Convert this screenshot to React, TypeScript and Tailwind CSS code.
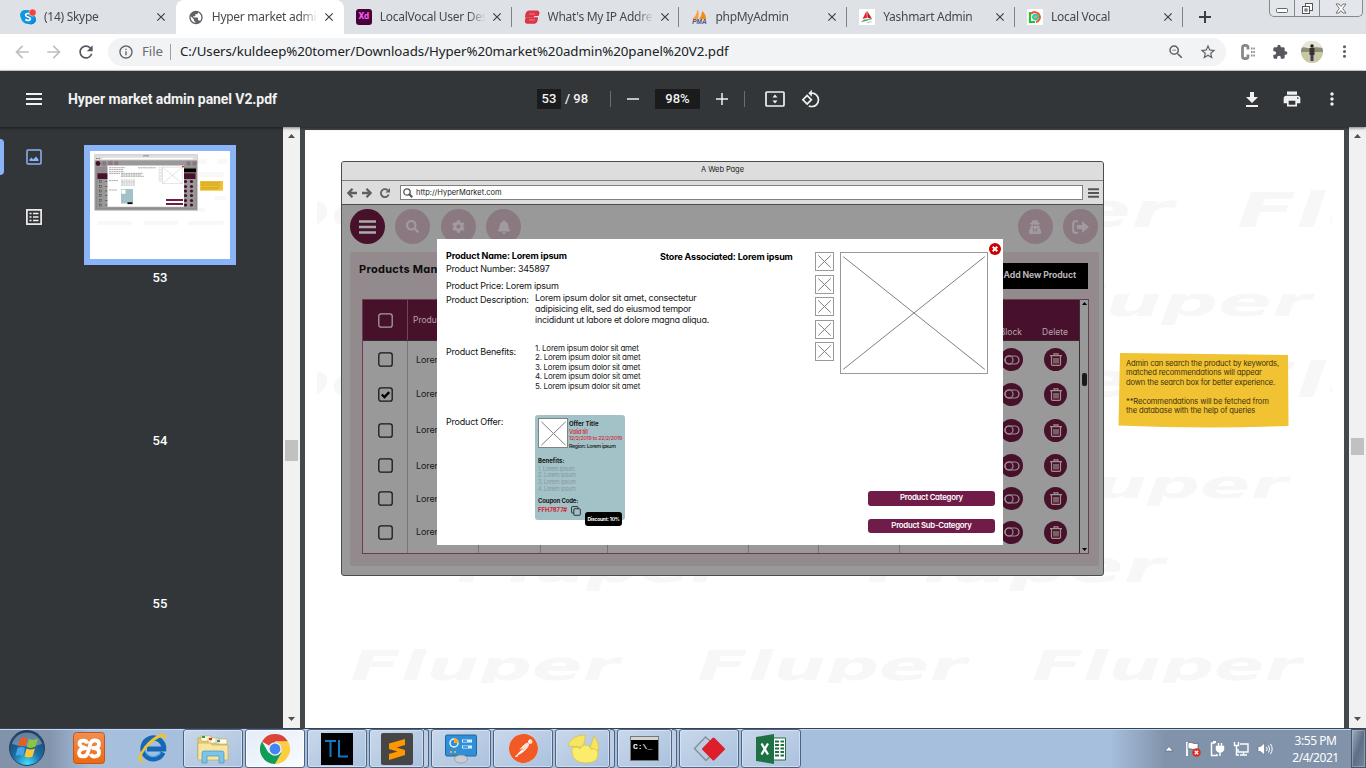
import type { ReactNode } from "react";
import {
  MdArrowBack,
  MdArrowForward,
  MdClose,
  MdExtension,
  MdInfoOutline,
  MdMoreVert,
  MdPrint,
  MdPublic,
  MdRefresh,
  MdRotate90DegreesCcw,
  MdStarBorder,
  MdZoomOut,
} from "react-icons/md";
import { FaBell, FaCog, FaSearch, FaUserSecret } from "react-icons/fa";
import { SiPostman } from "react-icons/si";

/* ---------- browser chrome ---------- */

function SkypeIcon() {
  return (
    <svg viewBox="0 0 16 16" className="size-4">
      <circle cx="5" cy="6" r="5" fill="#0d9ee8" />
      <circle cx="11" cy="10.500" r="5" fill="#0a7fd0" />
      <circle cx="8" cy="8" r="7" fill="#0f95e2" />
      <path d="M10.500 5.500C9 4 5.500 4.200 5.600 6.200 5.800 8.400 10.400 7.400 10.400 9.800c0 2-3.500 2.200-5 .6" fill="none" stroke="#fff" strokeWidth="1.600" />
      <circle cx="12.600" cy="3.600" r="3.600" fill="#f2443c" stroke="#dee1e6" strokeWidth=".6" />
    </svg>
  );
}

function XdIcon() {
  return (
    <span className="flex size-4 items-center justify-center rounded-[3px] bg-[#470137] font-['Roboto',sans-serif] text-[9px] font-bold text-[#ff61f6]">
      Xd
    </span>
  );
}

function ExpressIcon() {
  return (
    <svg viewBox="0 0 16 16" className="size-4">
      <path d="M5.500 1.500h7.500a2.500 2.500 0 0 1 2.300 3.400l-.8 2.200H1.200C1.200 3.500 3 1.500 5.500 1.500Z" fill="#dc3545" />
      <path d="M1.500 8.300h12.500C14 12.500 12.600 14.800 10 14.800H3.300A2.500 2.500 0 0 1 1 11.400Z" fill="#dc3545" />
      <path d="M1 7.500h9" stroke="#dc3545" strokeWidth="1.500" />
      <path d="M5 5h6M5 11h6" stroke="#e9a3ab" strokeWidth=".7" fill="none" />
    </svg>
  );
}

function PmaIcon() {
  return (
    <span className="flex size-4 flex-col items-center">
      <svg viewBox="0 0 16 10" className="h-[10px] w-4">
        <path d="M1 10C4 8 6 5 6.500 0 8 3 8 7 7 10Z" fill="#f9a13a" />
        <path d="M8 10c2-2 3-5 3-8 3 2 4 5 4 8Z" fill="#f58b0b" />
      </svg>
      <span className="font-['Liberation_Sans',sans-serif] text-[6.500px] leading-[6px] font-bold text-[#4b4f86] italic">PMA</span>
    </span>
  );
}

function YashIcon() {
  return (
    <svg viewBox="0 0 16 16" className="size-4 bg-white">
      <path d="M7.500 2 3.500 10 8 8.800Z" fill="#e8252a" />
      <path d="M8.200 2 13 10 8.500 8.800Z" fill="#c8151c" />
      <path d="M2 13c3-3 6-3 11.500-2.200C9 11 6 12.500 2 13Z" fill="#2fa866" />
      <path d="M7 13.800c2-1.200 4-1.300 6.500-.8Z" fill="#2fa866" />
    </svg>
  );
}

function VocalIcon() {
  return (
    <svg viewBox="0 0 16 16" className="size-4 bg-white">
      <path d="M3 3v10h5" fill="none" stroke="#22c032" strokeWidth="2.200" />
      <path d="M4 5a5 5 0 1 1 5 8" fill="none" stroke="#f0562c" strokeWidth="2" />
      <circle cx="8.500" cy="8" r="3" fill="#35c1f0" stroke="#2bd07a" />
      <circle cx="8.500" cy="8" r="1.200" fill="#f6a53a" />
    </svg>
  );
}

type TabInfo = { title: string; icon: ReactNode; active?: boolean; sep?: boolean };

const tabs: TabInfo[] = [
  { title: "(14) Skype", icon: <SkypeIcon /> },
  { title: "Hyper market admin", icon: <MdPublic className="size-[17px] text-[#5f6368]" />, active: true },
  { title: "LocalVocal User Des", icon: <XdIcon />, sep: true },
  { title: "What's My IP Addre", icon: <ExpressIcon />, sep: true },
  { title: "phpMyAdmin", icon: <PmaIcon />, sep: true },
  { title: "Yashmart Admin", icon: <YashIcon />, sep: true },
  { title: "Local Vocal", icon: <VocalIcon />, sep: true },
];

function Tab({ tab }: { tab: TabInfo }) {
  return (
    <div className={tab.active ? "relative flex h-[34px] w-[168px] items-center rounded-t-[8px] bg-white pl-3" : "relative flex h-[34px] w-[167.800px] items-center pl-3"}>
      <span className="flex size-4 shrink-0 items-center justify-center">{tab.icon}</span>
      <span className="ml-2 w-[107px] overflow-hidden text-[12px] tracking-[-0.280px] whitespace-nowrap text-[#45494d] [mask-image:linear-gradient(to_right,black_82%,transparent_99%)]">
        {tab.title}
      </span>
      <MdClose className="ml-[3px] size-[14px] shrink-0 text-[#3c4043]" />
      {tab.sep && <span className="absolute top-[7px] right-0 h-5 w-px bg-[#808387]" />}
    </div>
  );
}

function WindowControls() {
  return (
    <div className="flex h-[17px] w-[94px] rounded-b-[5px] border border-t-0 border-[#85888d] bg-[#e3e6ea]">
      <span className="flex w-[25px] items-center justify-center border-r border-[#85888d]">
        <svg viewBox="0 0 12 5" className="mt-[4px] h-[5px] w-3"><rect x=".5" y=".5" width="11" height="4" rx="1" fill="#fff" stroke="#666" /></svg>
      </span>
      <span className="flex w-[25px] items-center justify-center border-r border-[#85888d]">
        <svg viewBox="0 0 13 13" className="size-[13px]" fill="#fff" stroke="#555">
          <rect x="4.500" y="1.500" width="7" height="7" />
          <rect x="1.500" y="4.500" width="7" height="7" />
          <rect x="4" y="7" width="2" height="2" />
        </svg>
      </span>
      <span className="flex flex-1 items-center justify-center">
        <svg viewBox="0 0 12 11" className="h-[11px] w-3"><path d="M1 1h3l2 2.500L8 1h3L7.700 5.500 11 10H8L6 7.500 4 10H1l3.300-4.500Z" fill="#fff" stroke="#666" strokeWidth=".9" /></svg>
      </span>
    </div>
  );
}

function TabStrip() {
  return (
    <div className="flex h-[34px] shrink-0 bg-[#dee1e6] pl-2 font-['Noto_Sans',sans-serif]">
      {tabs.map((t) => (
        <Tab key={t.title} tab={t} />
      ))}
      <span className="ml-[12px] flex w-5 items-center justify-center">
        <svg viewBox="0 0 12 12" className="size-3"><path d="M6 0v12M0 6h12" stroke="#3c4043" strokeWidth="2" /></svg>
      </span>
      <div className="mr-[3px] ml-auto">
        <WindowControls />
      </div>
    </div>
  );
}

function AddressBar() {
  return (
    <div className="flex h-[37px] shrink-0 items-center border-b border-[#d5d7da] bg-white pb-px font-['Noto_Sans',sans-serif]">
      <div className="flex w-[108px] items-center pl-[12px]">
        <MdArrowBack className="size-5 text-[#bdbfc1]" />
        <MdArrowForward className="ml-3 size-5 text-[#bdbfc1]" />
        <MdRefresh className="ml-3 size-[20px] text-[#55585c]" />
      </div>
      <div className="flex h-7 w-[1118px] items-center rounded-full bg-[#f1f3f4] pl-[10px]">
        <MdInfoOutline className="size-4 text-[#5f6368]" />
        <span className="ml-[8px] w-[28px] text-[13.300px] tracking-[-0.100px] text-[#6a6e73]">File</span>
        <span className="h-4 w-px bg-[#9aa0a6]" />
        <span className="ml-[9px] text-[13.300px] tracking-[-0.070px] whitespace-nowrap text-[#202124]">
          C:/Users/kuldeep%20tomer/Downloads/Hyper%20market%20admin%20panel%20V2.pdf
        </span>
        <MdZoomOut className="ml-auto size-[18px] text-[#5f6368]" />
        <MdStarBorder className="mr-[9px] ml-[14px] size-[18px] text-[#5f6368]" />
      </div>
      <svg viewBox="0 0 16 16" className="ml-[14px] h-4 w-4">
        <path d="M8 5.500V3.500a2 2 0 0 0-2-2H4.500a2 2 0 0 0-2 2v9a2 2 0 0 0 2 2H6a2 2 0 0 0 2-2v-2" fill="none" stroke="#8a8a8a" strokeWidth="2.800" />
        <path d="M11 4.500h1.500M13.300 4.500h1.500M11 8h1.500M13.300 8h1.500M11 11.500h1.500M13.300 11.500h1.500" stroke="#8a8a8a" strokeWidth="2.200" />
      </svg>
      <MdExtension className="ml-[16px] size-4 text-[#55585c]" />
      <svg viewBox="0 0 22 22" className="ml-[13px] size-[22px] overflow-hidden rounded-full bg-[#c9c7a4]">
        <path d="M0 0h22v7H0Z" fill="#e7e6da" />
        <path d="M0 7c4-2 6 1 9 0s9-1 13 0v4H0Z" fill="#8b8f76" />
        <path d="M8.500 7h5v7h-5Z" fill="#3b3131" />
        <circle cx="11" cy="5" r="1.800" fill="#2b211d" />
        <path d="M9.500 14h3v6h-3Z" fill="#31455e" />
      </svg>
      <MdMoreVert className="ml-[12px] size-[19px] text-[#5f6368]" />
    </div>
  );
}

function PdfToolbar() {
  return (
    <div className="relative z-10 flex h-[56px] shrink-0 items-center bg-[#323639] font-['Roboto',sans-serif] text-[#f1f1f1] shadow-[0_1px_3px_rgba(0,0,0,0.5)]">
      <svg viewBox="0 0 16 12" className="ml-[26px] h-3 w-4"><path d="M0 1h16M0 6h16M0 11h16" stroke="#f1f1f1" strokeWidth="2" /></svg>
      <span className="ml-[26px] w-[469px] text-[14px] font-bold tracking-[-0.080px]">Hyper market admin panel V2.pdf</span>
      <span className="flex h-5 w-6 items-center justify-center bg-[#191b1c] text-[13px] font-medium">53</span>
      <span className="ml-[4px] w-[45px] text-[13px] font-medium whitespace-pre">{"/ 98"}</span>
      <span className="h-4 w-px bg-[#6b6e70]" />
      <svg viewBox="0 0 12 12" className="ml-[16px] size-3"><path d="M0 6h12" stroke="#f1f1f1" strokeWidth="1.500" /></svg>
      <span className="ml-[16px] flex h-5 w-[45px] items-center justify-center bg-[#191b1c] text-[13px] font-medium">98%</span>
      <svg viewBox="0 0 12 12" className="ml-[16px] size-3"><path d="M0 6h12M6 0v12" stroke="#f1f1f1" strokeWidth="1.500" /></svg>
      <span className="ml-[16px] h-4 w-px bg-[#6b6e70]" />
      <svg viewBox="0 0 20 16" className="ml-[20px] h-4 w-5">
        <rect x="1" y="1" width="18" height="14" rx="1" fill="none" stroke="#f1f1f1" strokeWidth="1.700" />
        <path d="M10 3.500 12.500 6.500h-5ZM10 12.500 12.500 9.500h-5Z" fill="#f1f1f1" />
      </svg>
      <MdRotate90DegreesCcw className="ml-[16px] size-[20px]" />
      <svg viewBox="0 0 12 15" className="ml-auto h-[15px] w-3"><path d="M4 0h4v5h4l-6 6-6-6h4ZM0 13h12v2H0Z" fill="#f1f1f1" /></svg>
      <MdPrint className="ml-[24px] size-5" />
      <MdMoreVert className="mr-[24px] ml-[20px] size-5" />
    </div>
  );
}

/* ---------- sidebar ---------- */

function ScrollBar({ side }: { side: "left" | "right" }) {
  return (
    <div className="flex w-[17px] shrink-0 flex-col items-center bg-[#f1f1f1] pt-[7px] pb-[7px]">
      <svg viewBox="0 0 7 4" className="h-1 w-[7px]"><path d="M3.500 0 7 4H0Z" fill="#505050" /></svg>
      <span className={side === "left" ? "mt-[302px] h-[21px] w-[13px] bg-[#c1c1c1]" : "mt-[300px] h-[17px] w-[13px] bg-[#c1c1c1]"} />
      <svg viewBox="0 0 7 4" className="mt-auto h-1 w-[7px]"><path d="M0 0h7L3.500 4Z" fill="#505050" /></svg>
    </div>
  );
}

const thumbRows = [28, 33, 37.5, 42, 47, 51.5];

function Thumbnail() {
  return (
    <svg viewBox="0 0 140 108" className="h-[108px] w-[140px] bg-white">
      <path
        d="M8 70h34l-1 4H7ZM54 70h35l-1 4H53ZM99 70h35l-1 4H98ZM108 8h9l-1 5h-9ZM128 8h10l-1 5h-10ZM109 21h26l-1 5h-26ZM125 45h11l-1 4h-10ZM104 57h11l-1 4h-10Z"
        fill="#f8f8f8"
      />
      <rect x="4.500" y="3.500" width="103" height="56" fill="#999" />
      <rect x="4.500" y="3.500" width="103" height="5.800" fill="#ddd" />
      <path d="M12 7.500h91" stroke="#fff" strokeWidth="1.500" />
      <path d="M6 7.500h4" stroke="#777" strokeWidth="1" strokeDasharray="1 .5" />
      <path d="M53 4.800h6" stroke="#777" strokeWidth=".8" />
      <rect x="6" y="16" width="101" height="42" fill="#928a8d" />
      <rect x="7.500" y="27" width="98" height="30" fill="#999" />
      <rect x="7.500" y="22.300" width="98" height="5.700" fill="#47102b" />
      <rect x="94" y="17.500" width="12" height="3.800" fill="#000" />
      <circle cx="8" cy="12.500" r="2.400" fill="#47102b" />
      {[14.2, 20.4, 26.4, 98.5, 104.5].map((x) => (
        <circle key={x} cx={x} cy="12.500" r="2.400" fill="#8b7981" />
      ))}
      {thumbRows.map((y) => (
        <g key={y}>
          <rect x="9.500" y={y + 1.5} width="2" height="2" fill="none" stroke="#444" strokeWidth=".5" />
          <path d={`M15 ${y + 2.5}h4`} stroke="#555" strokeWidth=".8" />
          <circle cx="95.500" cy={y + 2.5} r="1.600" fill="#47102b" />
          <circle cx="101.500" cy={y + 2.5} r="1.600" fill="#47102b" />
        </g>
      ))}
      <rect x="17.500" y="14.500" width="76.500" height="41.300" fill="#fff" />
      <path d="M19 16.700h16M48 16.800h18M19 18.600h14M19 20.700h15M19 22.600h11M31 22.400h22M31 23.900h20M31 25.300h23M19 29.600h9M19 39h8" stroke="#888" strokeWidth=".7" strokeDasharray="2 .4" />
      <path d="M31 29h14M31 30.400h14M31 31.700h14M31 33h14M31 34.300h14" stroke="#aaa" strokeWidth=".6" strokeDasharray="2 .4" />
      <path d="M72.500 16.200h19.800v16.400H72.500ZM72.500 16.200l19.800 16.400M92.300 16.200 72.500 32.600" fill="none" stroke="#bbb" strokeWidth=".4" />
      {[17, 20, 23, 26, 29].map((y) => (
        <rect key={y} x="69" y={y - 0.5} width="2.300" height="2.300" fill="none" stroke="#ccc" strokeWidth=".4" />
      ))}
      <rect x="31" y="38" width="12" height="14.500" fill="#a3c2c8" />
      <rect x="31.500" y="38.700" width="4" height="4" fill="#fff" />
      <rect x="37.500" y="51.300" width="5" height="1.800" fill="#000" />
      <rect x="76" y="48" width="17" height="2" fill="#701b48" />
      <rect x="76" y="52" width="17" height="2" fill="#701b48" />
      <circle cx="93" cy="15.600" r=".9" fill="#c00" />
      <rect x="110" y="30" width="23" height="9.700" fill="#f1c232" />
      <path d="M111 31.500h20M111 33h18M111 34.300h20M111 36.600h19M111 37.900h17" stroke="#b8941f" strokeWidth=".5" />
    </svg>
  );
}

function Sidebar() {
  return (
    <aside className="flex w-[300px] shrink-0 bg-[#323639]">
      <nav className="flex w-[84px] flex-col">
        <div className="mt-[12px] flex h-9 items-center">
          <span className="h-9 w-1 rounded-r-[4px] bg-[#8ab4f8]" />
          <svg viewBox="0 0 16 16" className="ml-[22px] size-4">
            <rect x="1" y="1" width="14" height="14" rx="1" fill="none" stroke="#8ab4f8" strokeWidth="1.500" />
            <path d="M3.500 12V10.500l2-2 1.700 2L10 7.500l2.500 3V12Z" fill="#8ab4f8" />
          </svg>
        </div>
        <svg viewBox="0 0 16 16" className="mt-[34px] ml-[26px] size-4" fill="none" stroke="#f1f1f1">
          <rect x=".9" y=".9" width="14.200" height="14.200" strokeWidth="1.700" />
          <path d="M3.500 4.500h2M7 4.500h5.500M3.500 8h2M7 8h5.500M3.500 11.500h2M7 11.500h5.500" strokeWidth="1.700" />
        </svg>
      </nav>
      <div className="flex w-[199px] flex-col pt-[18px] font-['Roboto',sans-serif] text-[13px] font-medium text-white">
        <div className="w-[152px] border-[6px] border-[#8ab4f8] bg-white">
          <Thumbnail />
        </div>
        <span className="mt-[5px] w-[152px] text-center leading-[16px]">53</span>
        <span className="mt-[147px] w-[152px] text-center leading-[16px]">54</span>
        <span className="mt-[147px] w-[152px] text-center leading-[16px]">55</span>
      </div>
      <ScrollBar side="left" />
    </aside>
  );
}

/* ---------- PDF page ---------- */

const marks = [
  [-183, 97, 308, 48], [560, 97, 308, 48], [932, 97, 312, 48],
  [719, 186, 287, 40],
  [-183, 267, 308, 48], [560, 267, 308, 48], [932, 267, 312, 48],
  [713, 368, 269, 38],
  [152, 452, 270, 44], [562, 452, 297, 44],
  [45, 550, 269, 41], [392, 550, 269, 41], [727, 550, 269, 41],
];

function Watermark() {
  return (
    <svg viewBox="12 0 1015 553" className="absolute top-0 left-[12px] h-[553px] w-[1015px]">
      {marks.map(([x, y, w, s], i) => (
        <text key={i} x={x} y={y} textLength={w} lengthAdjust="spacingAndGlyphs" fontFamily="DejaVu Sans" fontWeight="bold" fontStyle="italic" fontSize={s} fill="#f7f7f7">
          Fluper
        </text>
      ))}
    </svg>
  );
}

function Bubble({ children, dark }: { children: ReactNode; dark?: boolean }) {
  return (
    <span className={dark ? "flex size-[35px] items-center justify-center rounded-full bg-[#47102b] text-[#aaa]" : "flex size-[35px] items-center justify-center rounded-full bg-[#8b7981] text-[#a29b9e]"}>
      {children}
    </span>
  );
}

function Check({ on, light }: { on?: boolean; light?: boolean }) {
  return (
    <svg viewBox="0 0 15 15" className="size-[15px]" fill="none" stroke={light ? "#a99ba2" : "#15191b"}>
      <rect x=".8" y=".8" width="13.400" height="13.400" rx="2.200" strokeWidth="1.300" />
      {on && <path d="m3.800 7.500 2.700 2.600 4.700-4.900" strokeWidth="2.400" stroke="#000" />}
    </svg>
  );
}

function BlockIcon() {
  return (
    <span className="flex size-[23px] items-center justify-center rounded-full bg-[#47102b]">
      <svg viewBox="0 0 16 10" className="h-[10px] w-4" fill="none" stroke="#9c8f95" strokeWidth="1.200">
        <rect x="1" y="1" width="14" height="8" rx="4" />
        <circle cx="5" cy="5" r="4" />
      </svg>
    </span>
  );
}

function DeleteIcon() {
  return (
    <span className="flex size-[23px] items-center justify-center rounded-full bg-[#47102b]">
      <svg viewBox="0 0 12 13" className="h-[13px] w-3" fill="none" stroke="#a1928f" strokeWidth="1.200">
        <path d="M0 2.700h12M4 2.500V.8h4v1.700M1.500 3v8.200q0 1.200 1.200 1.200h6.600q1.200 0 1.200-1.200V3M4 5v5.500M6 5v5.500M8 5v5.500" />
      </svg>
    </span>
  );
}

const tableRows = [
  { h: "h-[37px]" },
  { h: "h-[32px]", on: true },
  { h: "h-[40px]" },
  { h: "h-[31px]" },
  { h: "h-[35px]" },
  { h: "h-[32px]" },
  { h: "h-[5px]", blank: true },
];

const cols = "grid grid-cols-[45px_71px_62px_67px_141px_70px_81px_134px_45px]";

function ProductsTable() {
  return (
    <div className="mr-[10px] ml-[12px] flex h-[255px] border border-[#6d3c52] bg-[#999]">
      <div className="w-[716px] overflow-hidden">
        <div className={`${cols} h-[41px] border-b border-[#3a2a30] bg-[#47102b] text-[8.500px] text-[#b3a5ab]`}>
          <span className="flex items-center justify-center border-r border-[#6b4a58]"><Check light /></span>
          <span className="flex items-center pl-[5px]">Produ</span>
          <span /><span /><span /><span /><span />
          <span className="flex items-end justify-end pr-[12px] pb-[1px]">Block</span>
          <span className="flex items-end justify-center pr-[3px] pb-[1px]">Delete</span>
        </div>
        {tableRows.map((r, i) => (
          <div key={i} className={`${cols} ${r.h} text-[9px] text-[#17191a]`}>
            <span className="flex items-center justify-center border-r border-[#757575]">{!r.blank && <Check on={r.on} />}</span>
            <span className="flex items-center border-r border-[#757575] pl-[8px] tracking-[-0.100px]">{!r.blank && "Lorer"}</span>
            <span className="border-r border-[#757575]" />
            <span className="border-r border-[#757575]" />
            <span className="border-r border-[#757575]" />
            <span className="border-r border-[#757575]" />
            <span className="border-r border-[#757575]" />
            <span className="flex items-center justify-end pr-[11px]">{!r.blank && <BlockIcon />}</span>
            <span className="flex items-center pl-[10px]">{!r.blank && <DeleteIcon />}</span>
          </div>
        ))}
      </div>
      <div className="flex w-[9px] flex-col items-center border-l border-[#333] py-[2px]">
        <svg viewBox="0 0 5 3" className="h-[3px] w-[5px]"><path d="M2.500 0 5 3H0Z" /></svg>
        <span className="mt-[68px] h-[13px] w-[5px] rounded-[2px] bg-[#1b1b1b]" />
        <svg viewBox="0 0 5 3" className="mt-auto h-[3px] w-[5px]"><path d="M0 0h5L2.500 3Z" /></svg>
      </div>
    </div>
  );
}

function CrossBox({ className }: { className: string }) {
  return (
    <svg viewBox="0 0 100 100" preserveAspectRatio="none" className={className}>
      <path d="M1.500 3 98.500 97M98.500 3 1.500 97" stroke="#808080" strokeWidth="1" vectorEffect="non-scaling-stroke" />
    </svg>
  );
}

function OfferCard() {
  return (
    <div className="relative h-[105px] w-[90px] rounded-[3px] bg-[#a3c2c8] pt-[3px] pl-[3px] text-[5.500px] leading-[6.500px] tracking-normal whitespace-nowrap">
      <div className="flex h-[32px]">
        <div className="flex h-[30px] w-[30px] items-center justify-center border border-[#7b8587] bg-white">
          <CrossBox className="size-[25px]" />
        </div>
        <div className="pt-[2px] pl-[1px]">
          <p className="text-[6px] leading-[7px] font-bold text-[#151515]">Offer Title</p>
          <p className="mt-[2px] leading-[6px] font-medium tracking-[-0.200px] text-[#d5222d]">Valid till</p>
          <p className="text-[5.200px] leading-[6px] font-medium tracking-[-0.200px] text-[#d5222d]">12/2/2019 to 22/2/2019</p>
          <p className="mt-[2px] text-[5.300px] leading-[7px] font-medium tracking-[-0.350px] text-[#151515]">Region: Lorem ipsum</p>
        </div>
      </div>
      <p className="mt-[8px] text-[6px] font-bold text-[#151515]">Benefits:</p>
      <ol className="mt-px text-[5.500px] leading-[6.700px] tracking-[-0.180px] text-[#84979b]">
        <li>1. Lorem ipsum</li>
        <li>2. Lorem ipsum</li>
        <li>3. Lorem ipsum</li>
        <li>4. Lorem ipsum</li>
      </ol>
      <p className="mt-[6px] text-[6px] font-bold tracking-[-0.150px] text-[#151515]">Coupon Code:</p>
      <div className="flex">
        <p className="w-[33px] pt-[2px] text-[6px] font-bold tracking-[-0.050px] text-[#d5222d]">FFH7877#</p>
        <svg viewBox="0 0 10 10" className="mt-px size-[10px]" fill="#a3c2c8" stroke="#222" strokeWidth=".9">
          <rect x=".6" y=".6" width="6.500" height="6.500" rx=".6" />
          <rect x="2.800" y="2.800" width="6.500" height="6.500" rx=".6" />
        </svg>
      </div>
      <span className="absolute top-[97px] left-[50px] flex h-[14px] w-[37px] items-center justify-center rounded-[3px] bg-black text-[4.900px] font-bold tracking-[-0.180px] text-white">
        Discount: 10%
      </span>
    </div>
  );
}

function ProductModal() {
  return (
    <div className="absolute top-[78px] left-[96px] flex h-[306px] w-[566px] bg-white text-[9px] tracking-[-0.200px] whitespace-nowrap text-[#111]">
      <div className="w-[378px] shrink-0 pt-[10px] pl-[9px]">
        <div className="flex h-[13px] items-center font-bold tracking-[-0.160px] text-black">
          <span className="w-[214px]">Product Name: Lorem ipsum</span>
          <span className="pt-[2px]">Store Associated: Lorem ipsum</span>
        </div>
        <p className="h-[14px] leading-[14px]">Product Number: 345897</p>
        <p className="mt-[2px] h-[15px] leading-[15px]">Product Price: Lorem ipsum</p>
        <div className="flex h-[50px]">
          <p className="w-[89px] pt-[2px] leading-[10px] tracking-[-0.220px]">Product Description:</p>
          <p className="leading-[10.800px] tracking-[-0.270px] text-[#222]">
            Lorem ipsum dolor sit amet, consectetur<br />
            adipisicing elit, sed do eiusmod tempor<br />
            incididunt ut labore et dolore magna aliqua.
          </p>
        </div>
        <div className="flex h-[72px]">
          <p className="w-[89px] pt-[4px] leading-[10px]">Product Benefits:</p>
          <ol className="pt-px text-[8px] leading-[9.450px] tracking-[-0.250px] text-[#222]">
            <li>1. Lorem ipsum dolor sit amet</li>
            <li>2. Lorem ipsum dolor sit amet</li>
            <li>3. Lorem ipsum dolor sit amet</li>
            <li>4. Lorem ipsum dolor sit amet</li>
            <li>5. Lorem ipsum dolor sit amet</li>
          </ol>
        </div>
        <div className="flex">
          <p className="w-[89px] pt-[2px] leading-[10px]">Product Offer:</p>
          <OfferCard />
        </div>
      </div>
      <div className="flex w-[180px] shrink-0 flex-col pt-[13px]">
        <div className="flex h-[122px]">
          <div className="flex w-[25px] flex-col gap-[3.500px]">
            {[0, 1, 2, 3, 4].map((n) => (
              <span key={n} className="flex size-[19px] items-center justify-center border border-[#999]">
                <CrossBox className="size-[13px]" />
              </span>
            ))}
          </div>
          <span className="flex h-[122px] w-[148px] items-center justify-center border border-[#999]">
            <CrossBox className="h-[120px] w-[146px]" />
          </span>
        </div>
        <div className="mt-[117px] ml-[53px] flex w-[127px] flex-col gap-[13px] text-[7.800px] font-semibold tracking-[-0.250px] text-white">
          <span className="flex h-[14.500px] items-center justify-center rounded-[3px] bg-[#701b48]">Product Category</span>
          <span className="flex h-[14.500px] items-center justify-center rounded-[3px] bg-[#701b48]">Product Sub-Category</span>
        </div>
      </div>
      <svg viewBox="0 0 12 12" className="absolute top-[4px] right-[2px] size-3">
        <circle cx="6" cy="6" r="6" fill="#cc0000" />
        <path d="m3.700 3.700 4.600 4.600M8.300 3.700 3.700 8.300" stroke="#fff" strokeWidth="2" />
      </svg>
    </div>
  );
}

function Wireframe() {
  return (
    <div className="relative h-[415px] w-[763px] shrink-0">
      <div className="flex h-full flex-col overflow-hidden rounded-[3px] border border-[#4c4c4c] bg-[#999]">
        <div className="h-[19px] shrink-0 border-b border-[#808080] bg-[#ddd] text-center text-[7.500px] leading-[15px] tracking-[-0.080px] text-[#222]">A Web Page</div>
        <div className="flex h-[24px] shrink-0 items-center border-b border-[#4c4c4c] bg-[#ddd]">
          <svg viewBox="0 0 10 10" className="ml-[5px] size-[10px]"><path d="M5.500.8 1.300 5l4.200 4.200M1.500 5H10" fill="none" stroke="#606060" strokeWidth="2.300" /></svg>
          <svg viewBox="0 0 10 10" className="ml-[5px] size-[10px]"><path d="M4.500.8 8.700 5 4.500 9.200M8.500 5H0" fill="none" stroke="#606060" strokeWidth="2.300" /></svg>
          <svg viewBox="0 0 10 10" className="ml-[8px] size-[10px]"><path d="M8.700 6.500A4 4 0 1 1 7.800 2.300" fill="none" stroke="#606060" strokeWidth="1.800" /><path d="M10 0v4.500H5.500Z" fill="#606060" /></svg>
          <span className="ml-[10px] flex h-[15px] w-[683px] items-center border border-[#808080] bg-white">
            <svg viewBox="0 0 10 10" className="ml-[2px] size-[10px]"><circle cx="4" cy="4" r="3.200" fill="none" stroke="#555" strokeWidth="1.300" /><path d="m6.300 6.300 3 3" stroke="#555" strokeWidth="2" /></svg>
            <span className="ml-[3px] text-[7.500px] text-[#222]">http://HyperMarket.com</span>
          </span>
          <svg viewBox="0 0 11 10" className="ml-[5px] h-[10px] w-[11px]"><path d="M0 1.300h11M0 5h11M0 8.700h11" stroke="#555" strokeWidth="2" /></svg>
        </div>
        <div className="flex h-[43px] shrink-0 gap-[10.400px] pt-[4px] pr-[5px] pl-[8px]">
          <Bubble dark><svg viewBox="0 0 17 14" className="h-[14px] w-[17px]"><path d="M0 1.500h17M0 7h17M0 12.500h17" stroke="#aaa" strokeWidth="2.600" /></svg></Bubble>
          <Bubble><FaSearch className="size-[13px]" /></Bubble>
          <Bubble><FaCog className="size-[13px]" /></Bubble>
          <Bubble><FaBell className="size-[14px]" /></Bubble>
          <span className="ml-auto"><Bubble><FaUserSecret className="size-[14px]" /></Bubble></span>
          <Bubble>
            <svg viewBox="0 0 17 14" className="h-[14px] w-[17px]">
              <path d="M6 1.200H3.200a2 2 0 0 0-2 2v7.600a2 2 0 0 0 2 2H6" fill="none" stroke="#a29b9e" strokeWidth="2" />
              <path d="M5 5h5V1l7 6-7 6V9H5Z" fill="#a29b9e" />
            </svg>
          </Bubble>
        </div>
        <div className="mt-[4px] ml-[8px] h-[314px] w-[749px] rounded-[3px] bg-[#928a8d]">
          <div className="flex h-[47px] justify-between pr-[11px] pl-[9px]">
            <span className="pt-[10px] text-[11px] leading-[14px] font-bold tracking-[0.300px] text-[#0b0b0b]">Products Man</span>
            <span className="mt-[11px] flex h-[26px] w-[100px] items-center justify-end bg-black pr-[12px] text-[8.700px] font-bold tracking-[-0.100px] whitespace-nowrap text-[#b9b5b6]">Add New Product</span>
          </div>
          <ProductsTable />
        </div>
      </div>
      <ProductModal />
    </div>
  );
}

function StickyNote() {
  return (
    <div className="relative mt-[192px] ml-[14px] h-[75px] w-[171px] pt-[6px] pl-[8px] text-[7.600px] leading-[9.400px] tracking-[-0.140px] whitespace-nowrap text-[#3b3211]">
      <svg viewBox="0 0 171 75" className="absolute inset-0 h-full w-full"><path d="M2 0 170 2 170.500 73Q85 76 .5 72.500Z" fill="#f1c232" /></svg>
      <p className="relative">
        Admin can search the product by keywords,<br />
        matched recommendations will appear<br />
        down the search box for better experience.<br />
        <br />
        **Recommendations will be fetched from<br />
        the database with the help of queries
      </p>
    </div>
  );
}

function PdfPage() {
  return (
    <main className="flex min-w-0 flex-1 bg-[#43484b] pt-[3px] pl-[5px]">
      <div className="relative h-full w-[1039px] overflow-hidden bg-white">
        <Watermark />
        <div className="relative flex pt-[31px] pl-[36px] font-['Inter','Open_Sans',sans-serif] [font-feature-settings:'cv11','ss03']">
          <Wireframe />
          <StickyNote />
        </div>
      </div>
    </main>
  );
}

/* ---------- taskbar ---------- */

function TaskButton({ children, stacked, active }: { children: ReactNode; stacked?: boolean; active?: boolean }) {
  return (
    <div className="flex h-[39px] w-[62px] pr-[2px]">
      <div
        className={
          active
            ? "flex flex-1 items-center justify-center rounded-[3px] border border-[#51647f] bg-linear-to-br from-[#e4ecf7] to-[#fafcff] shadow-[inset_0_0_0_1px_#ffffffcc]"
            : "flex flex-1 items-center justify-center rounded-[3px] border border-[#51647f] bg-linear-to-br from-[#c9d8eb] to-[#aac1de] shadow-[inset_0_0_0_1px_#dfe9f5aa]"
        }
      >
        {children}
      </div>
      {stacked && <div className="w-[5px] rounded-r-[3px] border border-l-0 border-[#51647f] bg-[#bccde4]" />}
    </div>
  );
}

function StartOrb() {
  return (
    <svg viewBox="0 0 36 36" className="size-9">
      <defs>
        <radialGradient id="orb" cx=".5" cy=".95" r=".9">
          <stop offset="0" stopColor="#3fe0ff" />
          <stop offset=".45" stopColor="#1b6fa8" />
          <stop offset="1" stopColor="#1c3f66" />
        </radialGradient>
      </defs>
      <circle cx="18" cy="18" r="17.500" fill="url(#orb)" stroke="#28405e" />
      <path d="M3 14a15.500 15.500 0 0 1 30 0q-14 5-30 0Z" fill="#fff" opacity=".32" />
      <path d="M11 9q4-2.500 7.500-.5l-2 8q-3.500-2-7.500 0Z" fill="#ea5a24" />
      <path d="M20 9q4 2.200 9-.5l-2.500 8q-4.500 2.500-8.500.5Z" fill="#8cc63f" />
      <path d="M8.500 18q4-2 7.500 0l-2 8q-3.500-2-7.500 0Z" fill="#4aa3e8" />
      <path d="M17.500 18.500q4 2.200 8.500 0l-2.500 8q-4 2.200-8 0Z" fill="#fdc82f" />
    </svg>
  );
}

function XamppIcon() {
  return (
    <svg viewBox="0 0 32 32" className="size-8">
      <defs>
        <linearGradient id="xampp" x1="0" y1="0" x2="0" y2="1">
          <stop offset="0" stopColor="#ef9054" />
          <stop offset="1" stopColor="#f0680d" />
        </linearGradient>
      </defs>
      <rect x=".5" y=".5" width="31" height="31" rx="3" fill="url(#xampp)" stroke="#c4541c" />
      <path d="M14.500 11.500C13.500 7.500 6.500 7.500 6.500 11.800c0 2.700 3 3.200 6 4.200-4 .5-6.500 1.800-6.500 5 0 4.500 7 4.500 8.500.5l3-10C19 7 26 7.500 26 12c0 2.500-2 4-6 4 4 0 6 1.800 6 4.500 0 5-7 5-8.500 1.500" fill="none" stroke="#fff" strokeWidth="3.800" strokeLinejoin="round" />
    </svg>
  );
}

function IeIcon() {
  return (
    <svg viewBox="0 0 32 32" className="size-8">
      <path d="M27 20.500A10.500 10.500 0 1 1 27.800 17H11" fill="none" stroke="#1667b4" strokeWidth="5" />
      <path d="M24.500 20.500A8.500 8.500 0 0 1 9 14" fill="none" stroke="#4bb2ee" strokeWidth="1.500" />
      <path d="M3.500 29.500C-1 25 13 5 25 2c5-1 6 2 4 6.500C29 5 27 4 23 6 13 11 3 24 5.500 28.500 7 30 10 29 12 27.500c-3 2.800-6.500 4-8.500 2Z" fill="#f4c12c" />
    </svg>
  );
}

function FolderIcon() {
  return (
    <svg viewBox="0 0 34 30" className="h-[30px] w-[34px]">
      <path d="M2 4h9l2 2h17v18H2Z" fill="#e8cf77" stroke="#b79a3d" strokeWidth=".7" />
      <path d="M5 2h10v5H5ZM12 4h11v5H12ZM20 5h11v5H20Z" fill="#fffbe6" stroke="#b79a3d" strokeWidth=".5" />
      <path d="M6 2h3v2H6Z" fill="#27a82b" /><path d="M13 4h3v2h-3Z" fill="#d43225" /><path d="M21 6h3v2h-3Z" fill="#268bd2" />
      <path d="M2 9h12l2 2h16v15H2Z" fill="#f6e6a2" stroke="#c5aa50" strokeWidth=".7" />
      <path d="M6 29V19q0-2 2-2h18q2 0 2 2v10h-5v-7H11v7Z" fill="#7cc4ea" stroke="#4b93c0" strokeWidth=".7" />
    </svg>
  );
}

function ChromeIcon() {
  return (
    <svg viewBox="0 0 30 30" className="size-[30px]">
      <path d="M15 15 2 7.500A15 15 0 0 1 28 7.500H15Z" fill="#db4437" />
      <path d="M15 15 15 7.500H28A15 15 0 0 1 15 30l6.500-11.200Z" fill="#ffcd40" />
      <path d="M15 15l6.500 3.800L15 30A15 15 0 0 1 2 7.500l6.500 11.300Z" fill="#0f9d58" />
      <circle cx="15" cy="15" r="6.800" fill="#f1f1f1" />
      <circle cx="15" cy="15" r="5.400" fill="#4285f4" />
    </svg>
  );
}

function Taskbar() {
  return (
    <footer className="flex h-10 shrink-0 items-start border-t border-[#33445a] bg-[linear-gradient(to_right,#8193ab_0px,#8395ad_50px,#a6bfdd_90px,#a6bfdd_1110px,#8193aa_1165px,#8193aa_100%)] font-['Noto_Sans',sans-serif] shadow-[inset_0_1px_0_#c8d8ea]">
      <span className="mt-[1px] ml-[9px]"><StartOrb /></span>
      <span className="mt-[3px] ml-[28px]"><XamppIcon /></span>
      <span className="mt-[3px] mr-[15px] ml-[31px]"><IeIcon /></span>
      <TaskButton><FolderIcon /></TaskButton>
      <TaskButton active><ChromeIcon /></TaskButton>
      <TaskButton>
        <svg viewBox="0 0 32 32" className="size-8"><rect width="32" height="32" fill="#000" /><path d="M4 8h11M9.500 8v16M18 7v16.500h9" fill="none" stroke="#0f7bc8" strokeWidth="2" /></svg>
      </TaskButton>
      <TaskButton stacked>
        <svg viewBox="0 0 32 32" className="size-8"><rect width="32" height="32" rx="2" fill="#464646" /><path d="M8 10.500 24 6v6l-8.500 2.500L24 17v5L8 27v-6l8.500-2.500L8 16Z" fill="#ff9800" /></svg>
      </TaskButton>
      <TaskButton>
        <svg viewBox="0 0 32 30" className="h-[30px] w-8">
          <rect x=".5" y="1" width="31" height="21" rx="1.500" fill="#2f8fd8" stroke="#1d669f" />
          <circle cx="9" cy="9" r="4" fill="none" stroke="#e8f4ff" strokeWidth="1.500" /><path d="M9 9V4a5 5 0 0 1 5 5Z" fill="#fba92b" />
          <path d="M17 7h10M17 13h10" stroke="#d9f2ff" strokeWidth="3" /><path d="M18 7h4M18 13h5" stroke="#1f83cf" strokeWidth="1.500" /><path d="M5 18h2M9 18h2" stroke="#fba92b" strokeWidth="2" />
          <ellipse cx="16" cy="25" rx="6.500" ry="4" fill="#c9cdd2" stroke="#888" strokeWidth=".6" />
        </svg>
      </TaskButton>
      <TaskButton><span className="rounded-full bg-white"><SiPostman className="size-[29px] text-[#f15a24]" /></span></TaskButton>
      <TaskButton stacked>
        <svg viewBox="0 0 32 32" className="size-8">
          <path d="M1 13C3 6 9 2 18 2q1 8-4 12Z" fill="#f7e463" stroke="#d6bc2b" strokeWidth=".6" />
          <path d="M27 3q6 8 4 15-4-2-8-3Z" fill="#f7e463" stroke="#d6bc2b" strokeWidth=".6" />
          <path d="M5 19q-1-5 4-5 3 0 4 2 1-4 6-4 4 0 5 4 7-1 7 5 0 9-12 9Q6 30 5 19Z" fill="#fbec6c" stroke="#d6bc2b" strokeWidth=".6" />
        </svg>
      </TaskButton>
      <TaskButton stacked>
        <span className="flex h-[25px] w-[29px] flex-col border border-[#777] bg-black">
          <span className="h-[3px] bg-[#d4d4d4]" />
          <span className="pt-[2px] pl-[2px] font-['Liberation_Mono',monospace] text-[8px] leading-[9px] font-bold text-white">C:\_</span>
        </span>
      </TaskButton>
      <TaskButton>
        <svg viewBox="0 0 32 28" className="h-7 w-8">
          <path d="M17 6 12.500 2 1.500 13.500 13 25.500l4-4" fill="none" stroke="#8b8f96" strokeWidth="1.500" />
          <rect x="12" y="5.500" width="17" height="17" rx="1.500" transform="rotate(45 20.500 14)" fill="#dd1f2b" />
        </svg>
      </TaskButton>
      <TaskButton>
        <svg viewBox="0 0 30 30" className="size-[30px]">
          <path d="M17 4h12.500v22H17Z" fill="#fff" stroke="#1e7145" />
          <path d="M19 7.500h4M24.500 7.500h3.500M19 11h4M24.500 11h3.500M19 14.500h4M24.500 14.500h3.500M19 18h4M24.500 18h3.500M19 21.500h4M24.500 21.500h3.500" stroke="#1e7145" strokeWidth="2" />
          <path d="M0 3 18 0v30L0 27Z" fill="#1e7145" />
          <path d="m5.500 9.500 6.500 11M12 9.500 5.500 20.500" stroke="#fff" strokeWidth="2.300" />
        </svg>
      </TaskButton>
      <div className="ml-auto flex h-[39px] items-center">
        <svg viewBox="0 0 10 6" className="h-[6px] w-[10px]"><path d="M5 .5 9 5H1Z" fill="#fff" stroke="#4a5a70" strokeWidth=".6" /></svg>
        <svg viewBox="0 0 16 16" className="ml-[11px] size-4">
          <path d="M2 1v14" stroke="#fff" strokeWidth="1.800" />
          <path d="M3 2c4-2 5 2 10 0v6c-4 2-6-1-10 0Z" fill="#fff" stroke="#445" strokeWidth=".6" />
          <circle cx="11.500" cy="11.500" r="4.300" fill="#dc2c22" /><path d="m9.800 9.800 3.400 3.400M13.200 9.800l-3.400 3.400" stroke="#fff" strokeWidth="1.300" />
        </svg>
        <svg viewBox="0 0 16 16" className="ml-[8px] size-4" fill="none" stroke="#fff" strokeWidth="1.400">
          <path d="M6 2H2.500v12.500H8V13" /><path d="M4 1h3" strokeWidth="2" />
          <path d="M7.500 5.500h7v3q-1 2.500-3.500 2.500T7.500 8.500ZM9.500 5V2M12.500 5V2M11 11v4" fill="#fff" />
        </svg>
        <svg viewBox="0 0 16 16" className="ml-[8px] size-4" fill="none" stroke="#fff" strokeWidth="1.400">
          <path d="M7 3h8v8H5V8M7 14h7M10.500 11v3" /><path d="M1.500 1v3.500h4V1M3.500 5v9H6" />
        </svg>
        <svg viewBox="0 0 16 16" className="ml-[8px] size-4">
          <path d="M1 5.500h2.500L7.500 2v12L3.500 10.500H1Z" fill="#fff" stroke="#4a5a70" strokeWidth=".5" />
          <path d="M9.500 6q1.300 2 0 4M11.500 4.500q2.300 3.500 0 7M13.500 3q3.300 5 0 10" fill="none" stroke="#fff" />
        </svg>
        <div className="mr-[7px] ml-[14px] w-[57px] text-center text-[12px] leading-[17px] tracking-[-0.450px] whitespace-nowrap text-white">
          <p>3:55 PM</p>
          <p>2/4/2021</p>
        </div>
        <span className="h-[39px] w-[15px] border border-[#4a5666] bg-linear-to-br from-[#a0afc2] via-[#5e6f86] to-[#73849b] shadow-[inset_0_0_0_1px_#b0bdcd80]" />
      </div>
    </footer>
  );
}

export default function App() {
  return (
    <div className="flex h-[768px] w-[1366px] flex-col overflow-hidden bg-white">
      <TabStrip />
      <AddressBar />
      <PdfToolbar />
      <div className="flex min-h-0 flex-1">
        <Sidebar />
        <PdfPage />
        <ScrollBar side="right" />
      </div>
      <Taskbar />
    </div>
  );
}
